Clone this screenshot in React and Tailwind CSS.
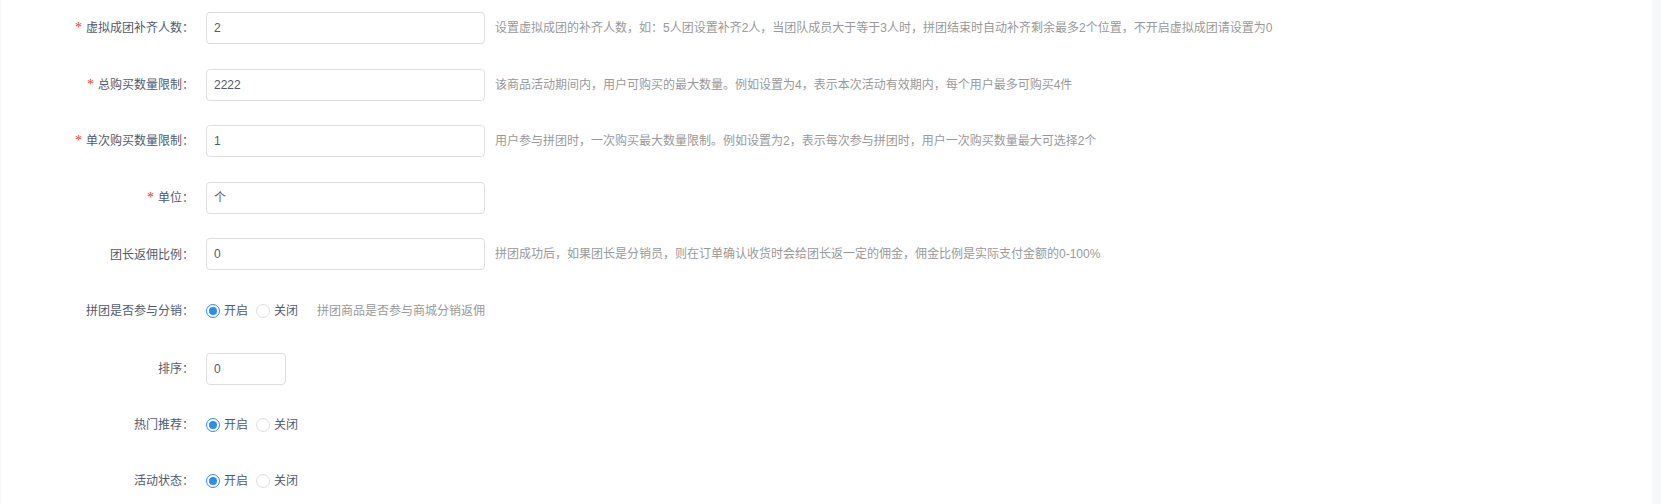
import React from 'react';

const font = { fontFamily: '"Liberation Sans", "Noto Sans CJK SC", sans-serif' };

function Label({ required, children }) {
  return (
    <div className="w-[205px] shrink-0 pr-3 text-right text-xs text-[#515a6e] leading-none">
      {required && (
        <span className="inline-block mr-1 text-sm text-[#ed4014] leading-none align-middle" style={{ fontFamily: '"Liberation Serif", serif' }}>*</span>
      )}
      <span className="align-middle">{children}</span>
    </div>
  );
}

function Hint({ children, className = 'ml-2.5' }) {
  return <span className={`${className} text-xs text-[#999]`}>{children}</span>;
}

function Input({ value, width = 'w-[279px]' }) {
  return (
    <div className={`${width} h-8 border border-[#dcdee2] rounded bg-white px-[7px] flex items-center text-xs text-[#515a6e]`}>
      {value}
    </div>
  );
}

function Radio({ checked, label }) {
  return (
    <label className="flex items-center mr-2 text-xs text-[#515a6e]">
      <span
        className={`w-[14px] h-[14px] rounded-full border flex items-center justify-center mr-1 bg-white ${
          checked ? 'border-[#2d8cf0]' : 'border-[#dcdee2]'
        }`}
      >
        {checked && <span className="w-2 h-2 rounded-full bg-[#2d8cf0]" />}
      </span>
      {label}
    </label>
  );
}

function RadioGroup() {
  return (
    <div className="flex items-center">
      <Radio checked label="开启" />
      <Radio label="关闭" />
    </div>
  );
}

const inputRows = [
  {
    label: '虚拟成团补齐人数：',
    required: true,
    value: '2',
    hint: '设置虚拟成团的补齐人数，如：5人团设置补齐2人，当团队成员大于等于3人时，拼团结束时自动补齐剩余最多2个位置，不开启虚拟成团请设置为0',
  },
  {
    label: '总购买数量限制：',
    required: true,
    value: '2222',
    hint: '该商品活动期间内，用户可购买的最大数量。例如设置为4，表示本次活动有效期内，每个用户最多可购买4件',
  },
  {
    label: '单次购买数量限制：',
    required: true,
    value: '1',
    hint: '用户参与拼团时，一次购买最大数量限制。例如设置为2，表示每次参与拼团时，用户一次购买数量最大可选择2个',
  },
  { label: '单位：', required: true, value: '个' },
  {
    label: '团长返佣比例：',
    value: '0',
    hint: '拼团成功后，如果团长是分销员，则在订单确认收货时会给团长返一定的佣金，佣金比例是实际支付金额的0-100%',
  },
];

export default function App() {
  return (
    <div className="w-full h-[504px] bg-[#f5f7f9] pl-px pr-[9px] overflow-hidden" style={font}>
      <div className="bg-white h-full pt-3">
        {inputRows.map((r) => (
          <div key={r.label} className="flex items-center h-8 mb-[24.5px]">
            <Label required={r.required}>{r.label}</Label>
            <Input value={r.value} />
            {r.hint && <Hint>{r.hint}</Hint>}
          </div>
        ))}

        <div className="flex items-center h-8 mb-[26px]">
          <Label>拼团是否参与分销：</Label>
          <RadioGroup />
          <Hint className="ml-[11px]">拼团商品是否参与商城分销返佣</Hint>
        </div>

        <div className="flex items-center h-8 mb-6">
          <Label>排序：</Label>
          <Input value="0" width="w-[80px]" />
        </div>

        <div className="flex items-center h-8 mb-6">
          <Label>热门推荐：</Label>
          <RadioGroup />
        </div>

        <div className="flex items-center h-8 mb-6">
          <Label>活动状态：</Label>
          <RadioGroup />
        </div>
      </div>
    </div>
  );
}
